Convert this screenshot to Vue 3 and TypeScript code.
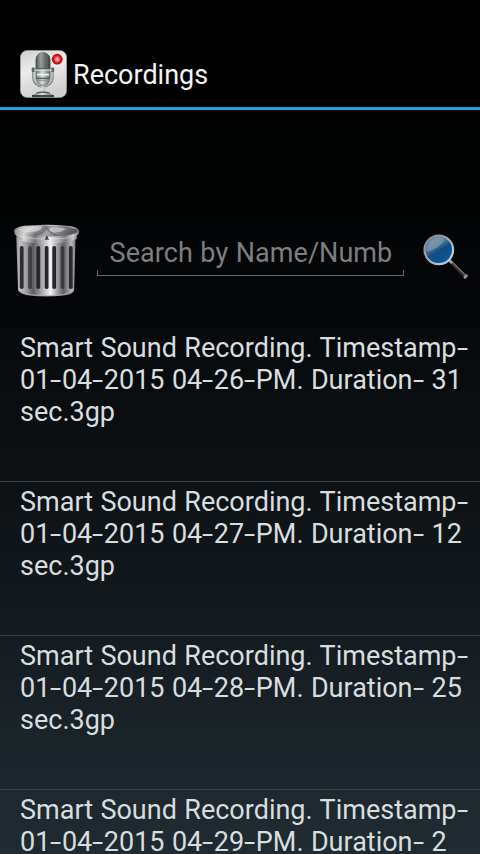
<script setup lang="ts">
interface Recording {
  id: number
  lines: string[][]
}

// Hyphens are kept as separate pieces because they are set wider than the font's own.
const pieces = (text: string): string[] => text.split(/(-)/).filter((piece) => piece !== '')

const details: string[] = ['04-26-PM. Duration- 31', '04-27-PM. Duration- 12', '04-28-PM. Duration- 25', '04-29-PM. Duration- 2']

const recordings: Recording[] = details.map((detail, id) => ({
  id,
  lines: ['Smart Sound Recording. Timestamp-', `01-04-2015 ${detail}`, ...(id < 3 ? ['sec.3gp'] : [])].map(pieces),
}))

const slats = [
  { x: 21.7, tone: 0.85 },
  { x: 30, tone: 0.55 },
  { x: 38.3, tone: 0.85 },
  { x: 46.6, tone: 0.9 },
  { x: 54.2, tone: 0.9 },
  { x: 62.4, tone: 0.55 },
  { x: 70.8, tone: 0.85 },
]
</script>

<template>
  <main class="screen">
    <header class="bar">
      <svg class="app-icon" viewBox="0 0 47 48" aria-hidden="true">
        <defs>
          <linearGradient id="tile" x1="0" y1="0" x2="0.3" y2="1">
            <stop offset="0" stop-color="#cfcfcf" />
            <stop offset="0.45" stop-color="#ececec" />
            <stop offset="1" stop-color="#cfcfcf" />
          </linearGradient>
          <linearGradient id="capsule" x1="0" y1="0" x2="1" y2="0">
            <stop offset="0" stop-color="#454a4a" />
            <stop offset="0.35" stop-color="#989d9c" />
            <stop offset="0.6" stop-color="#6c7170" />
            <stop offset="1" stop-color="#3b403f" />
          </linearGradient>
          <linearGradient id="metal" x1="0" y1="0" x2="1" y2="0">
            <stop offset="0" stop-color="#6c7674" />
            <stop offset="0.45" stop-color="#d5dedb" />
            <stop offset="1" stop-color="#606967" />
          </linearGradient>
          <radialGradient id="led">
            <stop offset="0" stop-color="#ffe0d8" />
            <stop offset="0.35" stop-color="#fa7a6e" />
            <stop offset="0.65" stop-color="#de1518" />
            <stop offset="1" stop-color="#b5000a" />
          </radialGradient>
        </defs>
        <rect x="0.4" y="0.4" width="46.2" height="47.2" rx="7" fill="url(#tile)" stroke="#aaa" stroke-width="0.6" />
        <path d="M13.2 21v6.5a9.7 9.2 0 0 0 19.4 0V21" fill="none" stroke="#6f7876" stroke-width="2" />
        <path d="M13.4 22v5.5a9.5 9 0 0 0 19 0V22" fill="none" stroke="#dfe6e3" stroke-width="0.7" />
        <path d="M15.9 9.5a7.1 7 0 0 1 14.2 0v18.8a7.1 7 0 0 1-14.2 0z" fill="url(#metal)" stroke="#68706e" stroke-width="0.7" />
        <path d="M15.9 18V9.5a7.1 7 0 0 1 14.2 0V18z" fill="url(#capsule)" />
        <path d="M18.5 5v13M21.3 3.5V18M24.2 3.5V18M27.2 5v13" stroke="#c4cac8" stroke-opacity="0.25" stroke-width="0.6" />
        <path d="M15.7 18.6h14.4M16 28.4h13.8" stroke="#56605d" stroke-width="1.1" />
        <path d="M17 24.6h12" stroke="#f2f7f5" stroke-width="1.6" />
        <path d="M16.2 30.3h13.4" stroke="#8b9491" stroke-width="1" />
        <rect x="11.7" y="17.5" width="3.2" height="4.5" rx="0.8" fill="#5d6765" />
        <rect x="31" y="17.5" width="3.2" height="4.5" rx="0.8" fill="#5d6765" />
        <path d="M14 20.2h18.2" stroke="#dce3e0" stroke-width="1" />
        <path d="M21.2 36.5h3.8v4.2c2 2.4 6 3.2 9 4.5v1.5H12v-1.5c3-1.3 7-2.1 9.2-4.5z" fill="url(#metal)" />
        <path d="M12 46h22" stroke="#323a38" stroke-width="1.8" />
        <path d="M16 43.3q7-2.2 14 0" fill="none" stroke="#45504c" stroke-width="1.2" />
        <circle cx="37.2" cy="9.2" r="5.4" fill="url(#led)" />
      </svg>
      <h1 class="title">Recordings</h1>
    </header>

    <section class="search">
      <svg class="bin" viewBox="0 0 92 80" aria-hidden="true">
        <defs>
          <linearGradient id="can" x1="0" y1="0" x2="1" y2="0">
            <stop offset="0" stop-color="#8f8e90" />
            <stop offset="0.06" stop-color="#c4c2c4" />
            <stop offset="0.18" stop-color="#9b9a9d" />
            <stop offset="0.28" stop-color="#5c5d63" />
            <stop offset="0.42" stop-color="#a3a2a5" />
            <stop offset="0.58" stop-color="#f6f5f5" />
            <stop offset="0.7" stop-color="#9b999d" />
            <stop offset="0.8" stop-color="#625f67" />
            <stop offset="0.93" stop-color="#b8b5b8" />
            <stop offset="1" stop-color="#7d7b7e" />
          </linearGradient>
          <linearGradient id="rim" x1="0" y1="0" x2="1" y2="0">
            <stop offset="0" stop-color="#77777a" />
            <stop offset="0.15" stop-color="#d8d7d8" />
            <stop offset="0.32" stop-color="#77777b" />
            <stop offset="0.55" stop-color="#efeeee" />
            <stop offset="0.78" stop-color="#7c797f" />
            <stop offset="0.9" stop-color="#c8c5c7" />
            <stop offset="1" stop-color="#555357" />
          </linearGradient>
          <linearGradient id="lid" x1="0" y1="0" x2="1" y2="0.2">
            <stop offset="0" stop-color="#88888c" />
            <stop offset="0.28" stop-color="#d2d2d4" />
            <stop offset="0.46" stop-color="#77777c" />
            <stop offset="0.62" stop-color="#a5a4a7" />
            <stop offset="1" stop-color="#58575c" />
          </linearGradient>
        </defs>
        <path d="M16.3 18h59.2l-1.3 51.5q-2 6.5-28 6.5T18 69.5z" fill="url(#can)" />
        <rect
          v-for="slat in slats"
          :key="slat.x"
          :x="slat.x - 1.9"
          y="26"
          width="3.8"
          height="43"
          rx="1.7"
          fill="#15151a"
          :fill-opacity="slat.tone"
        />
        <path d="M18.5 69.5q2 4.4 11 5.2 17 1.8 34 0 9-.8 10.2-5.2" fill="none" stroke="#b0aeb1" stroke-width="1.6" stroke-opacity="0.8" />
        <path d="M14 11q0-4.6 14-5.6 19-1.4 37 0 14 1 14.5 6-.4 3-2.6 4v3.3q-9 5-31 5t-29.5-5.6V16Q14 14 14 11z" fill="url(#rim)" />
        <ellipse cx="46.5" cy="11" rx="31" ry="5.6" fill="url(#lid)" />
        <path d="M18 10q7-4.4 25-3.6-2 4-6 4.8-11 2.6-19-1.2z" fill="#dadadc" fill-opacity="0.65" />
        <path d="M51 7.2q9 0 15 1.8-7 4.4-13 3.4-5-2-2-5.2z" fill="#d8d8da" fill-opacity="0.6" />
        <path d="M34 15.5q9-1 12.5-8Q49 13 57 15.5" fill="none" stroke="#5f5f64" stroke-width="1" />
        <path d="M44.5 20l2.3-4.6 2.4 4.6z" fill="#29292d" />
        <path d="M15.5 13.6q5 5.2 31 5.5t31.5-5.5" fill="none" stroke="#e5e4e5" stroke-width="0.9" stroke-opacity="0.6" />
      </svg>
      <div class="field">
        <span class="hint">Search by Name/Numb</span>
      </div>
      <svg class="lens" viewBox="0 0 50 50" aria-hidden="true">
        <defs>
          <linearGradient id="glass" x1="0.15" y1="0" x2="0.75" y2="1">
            <stop offset="0" stop-color="#76899a" />
            <stop offset="0.38" stop-color="#4d7596" />
            <stop offset="0.55" stop-color="#104c83" />
            <stop offset="1" stop-color="#0d5b9d" />
          </linearGradient>
          <linearGradient id="ring" x1="0" y1="0" x2="1" y2="1">
            <stop offset="0" stop-color="#78818b" />
            <stop offset="0.5" stop-color="#a4b0bb" />
            <stop offset="1" stop-color="#cbd8e5" />
          </linearGradient>
        </defs>
        <path d="M29 29L44.5 45" stroke="#2d2b2c" stroke-width="3.6" stroke-linecap="round" />
        <path d="M30.5 29.5L45 43.8" stroke="#7b7674" stroke-width="1.2" />
        <path d="M28 28l3 3" stroke="#a0a3a7" stroke-width="2.6" />
        <path d="M43.8 45.4l1.8-1.8" stroke="#a09d9c" stroke-width="2.4" stroke-linecap="round" />
        <circle cx="17.8" cy="17.8" r="14.3" fill="url(#glass)" stroke="url(#ring)" stroke-width="2.2" />
        <path d="M6.2 19.6A12 12 0 0 1 23.5 7Q19.5 16.6 6.2 19.6z" fill="#b4c0c9" fill-opacity="0.35" />
      </svg>
    </section>

    <ul class="list">
      <li v-for="recording in recordings" :key="recording.id" class="row">
        <span v-for="(line, n) in recording.lines" :key="n" class="line"><span v-for="(piece, i) in line" :key="i" :class="{ dash: piece === '-' }">{{ piece }}</span></span>
      </li>
    </ul>
  </main>
</template>

<style>
body {
  background: #000;
}
</style>

<style scoped>
.screen {
  box-sizing: border-box;
  width: 480px;
  height: 854px;
  overflow: hidden;
  display: flex;
  flex-direction: column;
  background: linear-gradient(#000 0, #010202 190px, #05070a 300px, #0c1013 440px, #12171b 580px, #182025 690px, #1e282e 790px, #202b31 854px);
  font-family: Roboto, "Liberation Sans", sans-serif;
  font-size: 27px;
  line-height: 32px;
}

.bar {
  box-sizing: border-box;
  flex: none;
  height: 110px;
  padding: 50px 0 0 20px;
  display: flex;
  align-items: flex-start;
  gap: 6px;
  background: #000;
  border-bottom: 3px solid #1da7d6;
}

.app-icon {
  width: 47px;
  height: 48px;
}

.title {
  margin: 9px 0 0;
  font-size: 27px;
  font-weight: 400;
  color: #f3f3f3;
}

.search {
  flex: none;
  height: 222px;
  box-sizing: border-box;
  padding-top: 110px;
  display: flex;
  align-items: flex-start;
}

.bin {
  width: 92px;
  height: 80px;
}

.field {
  box-sizing: border-box;
  width: 307px;
  height: 56px;
  margin-left: 5px;
  padding: 17px 0 0 12.6px;
  white-space: nowrap;
  letter-spacing: 0.06px;
  word-spacing: 0.7px;
  color: #7d7e80;
  background:
    linear-gradient(#666769, #666769) left bottom / 100% 1px no-repeat,
    linear-gradient(#666769, #666769) left bottom / 1px 6px no-repeat,
    linear-gradient(#666769, #666769) right bottom / 1px 6px no-repeat;
}

.lens {
  width: 50px;
  height: 50px;
  margin: 12px 0 0 17px;
}

.list {
  margin: 0;
  padding: 0;
  list-style: none;
}

.row {
  box-sizing: border-box;
  height: 154px;
  padding-left: 20px;
  color: #d8dddf;
  word-spacing: 0.7px;
  border-bottom: 1px solid #3a4045;
}

.row:first-child {
  height: 150px;
}

.row:not(:first-child) {
  padding-top: 4px;
}

.line {
  display: block;
  white-space: pre;
}

.dash {
  display: inline-block;
  margin-right: 4.1px;
  transform: scaleX(1.5);
  transform-origin: left center;
}
</style>
